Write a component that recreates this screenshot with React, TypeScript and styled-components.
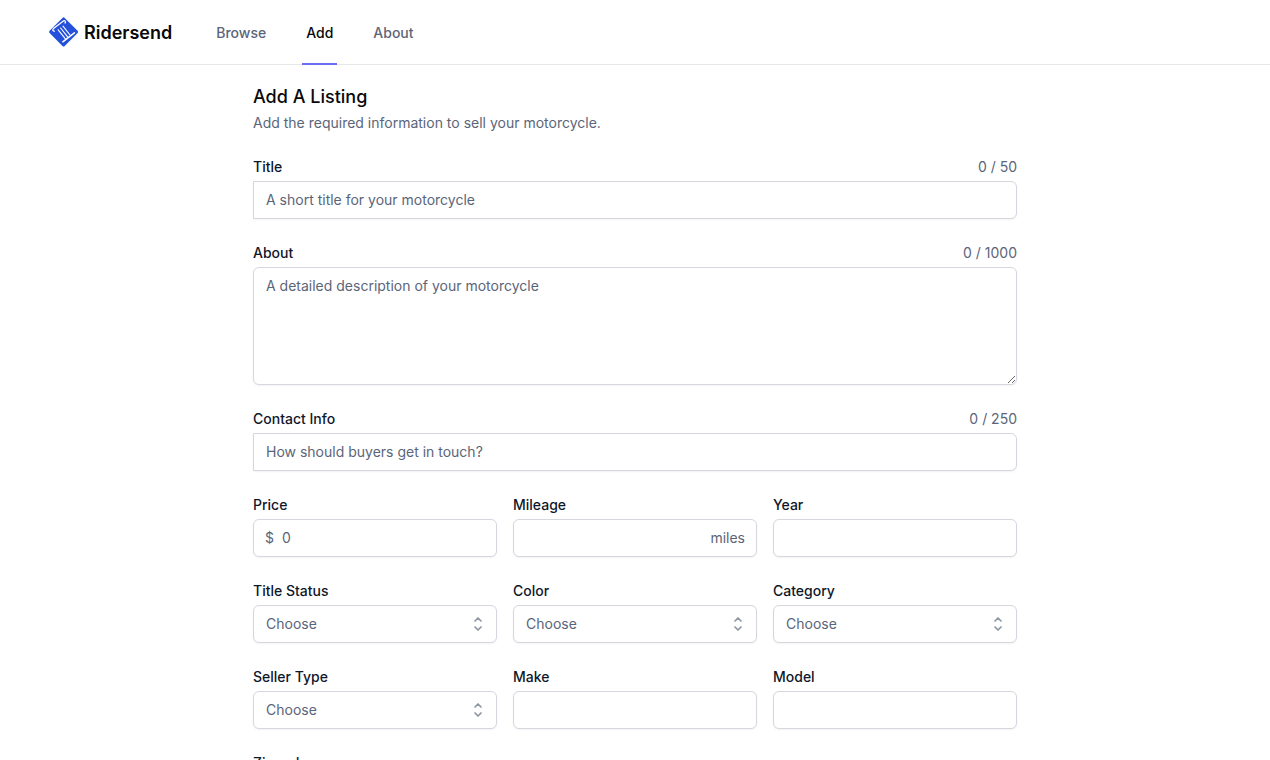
import React from "react";
import styled, { createGlobalStyle, css } from "styled-components";

const ink = "#0f172a";
const muted = "#5b6579";
const line = "#d4d7de";

const GlobalStyle = createGlobalStyle`
  *, *::before, *::after { box-sizing: border-box; }
  body {
    margin: 0;
    background: #fff;
    color: ${ink};
    font-family: Inter, "Liberation Sans", sans-serif;
    font-size: 14px;
    line-height: 20px;
  }
`;

const Header = styled.header`
  display: flex;
  align-items: stretch;
  gap: 40px;
  height: 65px;
  padding: 0 48px;
  border-bottom: 1px solid #e5e7eb;
`;

const Brand = styled.a`
  display: flex;
  align-items: center;
  gap: 5px;
  color: #09090b;
  font-size: 18px;
  font-weight: 600;
  line-height: 28px;
  text-decoration: none;
`;

const BrandName = styled.span`
  padding-top: 2px;
`;

const Nav = styled.nav`
  display: flex;
  gap: 32px;
  margin-bottom: -1px;
`;

const NavLink = styled.a<{ $active?: boolean }>`
  display: flex;
  align-items: center;
  padding: 2px 4px 0;
  border-bottom: 2px solid ${(p) => (p.$active ? "#6b6ef0" : "transparent")};
  color: ${(p) => (p.$active ? "#09090b" : muted)};
  font-weight: 500;
  text-decoration: none;
`;

const Main = styled.main`
  width: 100%;
  max-width: 796px;
  margin: 0 auto;
  padding: 20px 16px 48px;
`;

const Heading = styled.h1`
  margin: 0;
  color: #09090b;
  font-size: 18px;
  font-weight: 500;
  line-height: 24px;
`;

const Intro = styled.p`
  margin: 4px 0 24px;
  color: ${muted};
`;

const Form = styled.form`
  display: grid;
  grid-template-columns: repeat(3, minmax(0, 1fr));
  gap: 24px 16px;
`;

const FieldBox = styled.div<{ $wide?: boolean }>`
  display: flex;
  flex-direction: column;
  gap: 4px;
  grid-column: ${(p) => (p.$wide ? "1 / -1" : "auto")};
`;

const LabelRow = styled.div`
  display: flex;
  justify-content: space-between;
`;

const Label = styled.label`
  font-weight: 500;
`;

const Counter = styled.span`
  color: ${muted};
`;

const control = css`
  display: block;
  width: 100%;
  margin: 0;
  padding: 8px 12px;
  border: 1px solid ${line};
  border-radius: 6px;
  background: #fff;
  box-shadow: 0 1px 2px rgba(0, 0, 0, 0.05);
  color: ${ink};
  font: inherit;
  outline-color: #6366f1;

  &::placeholder {
    color: ${muted};
    opacity: 1;
  }
`;

const Input = styled.input<{ $squareLeft?: boolean; $prefixed?: boolean; $suffixed?: boolean }>`
  ${control}
  height: 38px;
  border-radius: ${(p) => (p.$squareLeft ? "0 6px 6px 0" : "6px")};
  padding-top: 7px;
  padding-bottom: 9px;
  padding-left: ${(p) => (p.$prefixed ? "28px" : "12px")};
  padding-right: ${(p) => (p.$suffixed ? "56px" : "12px")};
`;

const TextArea = styled.textarea`
  ${control}
  height: 118px;
  resize: vertical;
`;

const Select = styled.select`
  ${control}
  height: 38px;
  padding-right: 40px;
  appearance: none;
  color: ${muted};
`;

const ControlWrap = styled.div`
  position: relative;
`;

const Affix = styled.span<{ $side: "left" | "right" }>`
  position: absolute;
  top: 0;
  bottom: 0;
  ${(p) => p.$side}: 12px;
  display: flex;
  align-items: center;
  color: ${muted};
  pointer-events: none;
`;

const SelectorIcon = styled.svg`
  position: absolute;
  top: 9px;
  right: 9px;
  width: 20px;
  height: 20px;
  pointer-events: none;
`;

function Logo() {
  return (
    <svg width="31" height="32" viewBox="0 0 31 32" aria-hidden="true">
      <rect x="4.9" y="5.2" width="21.4" height="21.4" rx="1.6" transform="rotate(45 15.6 15.9)" fill="#2450dc" />
      <g fill="none" stroke="#fff" strokeLinecap="round">
        <path d="M6.4 15.2c-1.6.2-2.2-1.6-.9-2.6L15.4 5c1.3-.9 2.8.6 1.7 2" strokeWidth="1.3" />
        <path d="M10.2 13.8l7 8.8M12.6 12l7 8.8M15 10.2l7 8.8" strokeWidth="1.1" />
        <path d="M14.8 25.8L26.4 16.8" strokeWidth="1.5" />
      </g>
    </svg>
  );
}

type FieldProps = { id: string; label: string; counter?: string; wide?: boolean; children: React.ReactNode };

function Field({ id, label, counter, wide, children }: FieldProps) {
  return (
    <FieldBox $wide={wide}>
      <LabelRow>
        <Label htmlFor={id}>{label}</Label>
        {counter && <Counter>{counter}</Counter>}
      </LabelRow>
      {children}
    </FieldBox>
  );
}

function SelectField({ id, label }: { id: string; label: string }) {
  return (
    <Field id={id} label={label}>
      <ControlWrap>
        <Select id={id} defaultValue="">
          <option value="">Choose</option>
        </Select>
        <SelectorIcon viewBox="0 0 20 20" fill="none" stroke="#8f96a3" strokeWidth="1.75" strokeLinecap="round" strokeLinejoin="round" aria-hidden="true">
          <path d="M7 7l3-3 3 3m0 6l-3 3-3-3" />
        </SelectorIcon>
      </ControlWrap>
    </Field>
  );
}

function TextField({ id, label }: { id: string; label: string }) {
  return (
    <Field id={id} label={label}>
      <Input id={id} type="text" />
    </Field>
  );
}

export default function App() {
  return (
    <>
      <GlobalStyle />
      <Header>
        <Brand href="#">
          <Logo />
          <BrandName>Ridersend</BrandName>
        </Brand>
        <Nav>
          <NavLink href="#browse">Browse</NavLink>
          <NavLink href="#add" $active aria-current="page">Add</NavLink>
          <NavLink href="#about">About</NavLink>
        </Nav>
      </Header>
      <Main>
        <Heading>Add A Listing</Heading>
        <Intro>Add the required information to sell your motorcycle.</Intro>
        <Form>
          <Field id="title" label="Title" counter="0 / 50" wide>
            <Input id="title" type="text" placeholder="A short title for your motorcycle" $squareLeft />
          </Field>
          <Field id="about" label="About" counter="0 / 1000" wide>
            <TextArea id="about" placeholder="A detailed description of your motorcycle" />
          </Field>
          <Field id="contact" label="Contact Info" counter="0 / 250" wide>
            <Input id="contact" type="text" placeholder="How should buyers get in touch?" $squareLeft />
          </Field>
          <Field id="price" label="Price">
            <ControlWrap>
              <Input id="price" type="text" placeholder="0" $prefixed />
              <Affix $side="left">$</Affix>
            </ControlWrap>
          </Field>
          <Field id="mileage" label="Mileage">
            <ControlWrap>
              <Input id="mileage" type="text" $suffixed />
              <Affix $side="right">miles</Affix>
            </ControlWrap>
          </Field>
          <TextField id="year" label="Year" />
          <SelectField id="status" label="Title Status" />
          <SelectField id="color" label="Color" />
          <SelectField id="category" label="Category" />
          <SelectField id="seller" label="Seller Type" />
          <TextField id="make" label="Make" />
          <TextField id="model" label="Model" />
          <TextField id="zipcode" label="Zipcode" />
        </Form>
      </Main>
    </>
  );
}
